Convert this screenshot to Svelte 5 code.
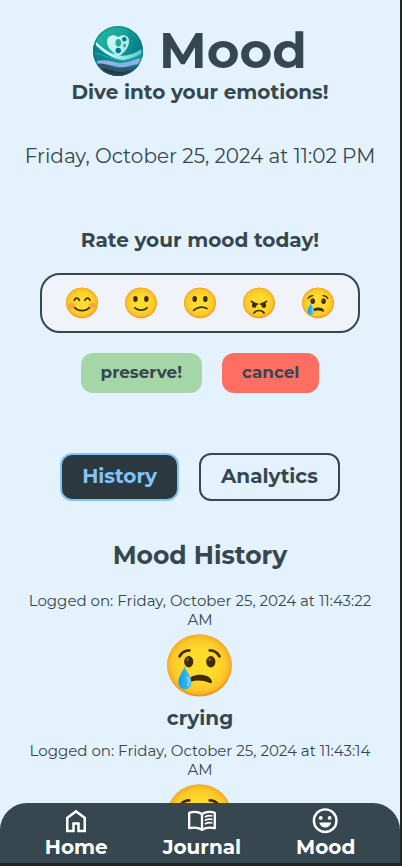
<script>
  const moods = ['blush', 'smile', 'confused', 'angry', 'crying'];
  const entries = [
    { id: 1, time: '11:43:22', mood: 'crying', label: 'crying' },
    { id: 2, time: '11:43:14', mood: 'crying' }
  ];
  const tabs = [
    { label: 'History', active: true },
    { label: 'Analytics', active: false }
  ];
</script>

{#snippet face(kind, size)}
  <svg class="face" width={size} height={size} viewBox="0 0 128 128" role="img" aria-label={kind}>
    <defs>
      <radialGradient id="skin-{kind}-{size}" cx=".5" cy=".5" r=".52">
        <stop offset=".45" stop-color="#fddc2b" />
        <stop offset=".8" stop-color="#fbc928" />
        <stop offset="1" stop-color="#f5a627" />
      </radialGradient>
      <linearGradient id="tear-{kind}-{size}" x1="0" x2="1">
        <stop offset="0" stop-color="#1698ee" />
        <stop offset=".6" stop-color="#29b6f6" />
        <stop offset="1" stop-color="#5bb8ed" />
      </linearGradient>
    </defs>
    <ellipse cx="64" cy="64" rx="60" ry="57.5" fill="#ef9518" />
    <ellipse cx="63.5" cy="62.5" rx="59.5" ry="56" fill="url(#skin-{kind}-{size})" />
    {#if kind === 'blush'}
      <ellipse cx="25" cy="74" rx="13" ry="11" fill="#f5795b" opacity=".5" />
      <ellipse cx="103" cy="74" rx="13" ry="11" fill="#f5795b" opacity=".5" />
      <path class="line" d="M35 54c3-11 16-11 19 0M75 54c3-11 16-11 19 0M37 82c14 14 40 14 54 0" />
    {:else if kind === 'smile'}
      <ellipse class="ink" cx="43" cy="49" rx="8.5" ry="11" />
      <ellipse class="ink" cx="84" cy="49" rx="8.5" ry="11" />
      <path class="line" d="M41 82c12 12 34 12 46 0" />
    {:else if kind === 'confused'}
      <ellipse class="ink" cx="44" cy="49" rx="8.5" ry="11" />
      <ellipse class="ink" cx="84" cy="49" rx="8.5" ry="11" />
      <path class="line" d="M40 92c12-12 32-17 50-7" />
    {:else if kind === 'angry'}
      <ellipse class="ink" cx="46" cy="72" rx="8.5" ry="10" />
      <ellipse class="ink" cx="82" cy="72" rx="8.5" ry="10" />
      <path d="M32 54h24v14z" fill="#fddc2b" />
      <path d="M96 54H72v14z" fill="#fddc2b" />
      <path class="line" d="M36 58c6 7 12 9 22 10M92 58c-6 7-12 9-22 10M45 102c7-13 31-13 38 0" />
    {:else}
      <path class="brow" d="M27 47c4-7 10-11 18-11M101 47c-4-7-10-11-18-11" />
      <ellipse class="ink" cx="44" cy="57" rx="8.5" ry="10.5" />
      <ellipse class="ink" cx="85" cy="57" rx="8.5" ry="10.5" />
      <ellipse class="glint" cx="42" cy="53" rx="2.500" ry="3" />
      <ellipse class="glint" cx="83" cy="53" rx="2.500" ry="3" />
      <path class="ink" d="M44 93c1-16 40-16 43 0 1 4-2 4-5 3-12-5-23-5-34-2-3 1-4 1-4-1z" />
      <path
        d="M36 66c-2 9-11 17-11 29 0 8 5 13 12 13 8 0 12-5 12-13 0-12-10-20-13-29z"
        fill="url(#tear-{kind}-{size})"
      />
      <path d="M41 84c4 6 4 13 1 18" fill="none" stroke="#a3dcf7" stroke-width="4" opacity=".7" />
    {/if}
  </svg>
{/snippet}

<div class="device">
  <main>
    <header>
      <div class="brand">
        <svg class="logo" width="50" height="50" viewBox="0 0 50 50" aria-hidden="true">
          <defs>
            <linearGradient id="sky" x1="0" y1="0" x2=".9" y2=".8">
              <stop offset="0" stop-color="#28c4a0" />
              <stop offset=".5" stop-color="#14a19b" />
              <stop offset="1" stop-color="#086c88" />
            </linearGradient>
            <linearGradient id="crest" x1="0" x2="1">
              <stop offset="0" stop-color="#f1ffff" />
              <stop offset=".5" stop-color="#a2eee5" />
              <stop offset="1" stop-color="#55c9c9" />
            </linearGradient>
            <linearGradient id="heart" x1="0" y1="0" x2="1" y2="1">
              <stop offset="0" stop-color="#d9fbf0" />
              <stop offset="1" stop-color="#98e7e5" />
            </linearGradient>
            <linearGradient id="deep" x1="0" x2="1">
              <stop offset="0" stop-color="#0b7f8a" />
              <stop offset="1" stop-color="#0e97a3" />
            </linearGradient>
            <clipPath id="disc"><circle cx="25" cy="25" r="25" /></clipPath>
          </defs>
          <g clip-path="url(#disc)">
            <path d="M0 0h50v50H0z" fill="url(#sky)" />
            <path d="M34 6c6 2 12 8 16 15v8l-18 5c8-6 12-14 2-28z" fill="#087f93" opacity=".4" />
            <path d="M0 17c8 9 17 15 27 16 9 1 17-4 23-8v16H0z" fill="url(#deep)" />
            <path d="M3 16c7 7 15 12 23 13.500 8 1.200 16-2.500 23-6.500v4c-8 5-15 8-23 6.500C17 31.500 9 25 3 19z" fill="url(#crest)" />
            <path d="M2 27c9 1 16 7 25 8 9 0 16-4 22-7" fill="none" stroke="#1bb0ac" stroke-width="1.200" />
            <path d="M4 35c10-2 15 1 23 2 8 0 14-4 22-5l-2 6c-8 0-14 4-21 3-9-1-13-4-23-3z" fill="#92b0e2" />
            <path d="M0 38.500c10-2.500 17 1.500 24 3.500 9 2 17-3 26-3v13H0z" fill="#34536f" />
            <path d="M2 43c12-3 19 4 28 3l10-2-10 7H5z" fill="#283746" />
          </g>
          <circle cx="25" cy="25" r="24.200" fill="none" stroke="#126b79" stroke-width="1.500" opacity=".5" />
          <path
            d="M25.500 31C19 26 14 21.500 14 15.500c0-6.800 8-8 11.200-4.200C29 7.500 36.500 9 36 15.500 35.800 22 31 27 25.500 31z"
            fill="url(#heart)"
          />
          <ellipse cx="25.300" cy="16.800" rx="2.800" ry="3.800" fill="#2aa49d" />
          <circle cx="31.300" cy="13.300" r="2.300" fill="#087691" />
          <ellipse cx="31.500" cy="19.500" rx="1.500" ry="2" fill="#39a8b0" />
          <circle cx="25.300" cy="24.500" r="2.700" fill="#087691" />
        </svg>
        <h1>Mood</h1>
      </div>
      <p class="tagline">Dive into your emotions!</p>
    </header>

    <p class="today">Friday, October 25, 2024 at 11:02 PM</p>

    <section class="rate">
      <h2>Rate your mood today!</h2>
      <div class="picker">
        {#each moods as mood}
          {@render face(mood, 34)}
        {/each}
      </div>
      <div class="actions">
        <button class="save">preserve!</button>
        <button class="cancel">cancel</button>
      </div>
    </section>

    <div class="tabs">
      {#each tabs as tab}
        <button class:active={tab.active}>{tab.label}</button>
      {/each}
    </div>

    <section class="history">
      <h3>Mood History</h3>
      {#each entries as entry (entry.id)}
        <article>
          <p>Logged on: Friday, October 25, 2024 at {entry.time} AM</p>
          <div class="logged">{@render face(entry.mood, 69)}</div>
          {#if entry.label}
            <strong>{entry.label}</strong>
          {/if}
        </article>
      {/each}
    </section>
  </main>

  <nav>
    <a href="#home">
      <svg width="30" height="30" viewBox="0 0 24 24" aria-hidden="true">
        <path d="M6 19h3v-6h6v6h3v-9l-6-4.500L6 10zm-2 2V9l8-6 8 6v12h-7v-6h-2v6z" fill="currentColor" />
      </svg>
      Home
    </a>
    <a href="#journal">
      <svg width="30" height="30" viewBox="0 0 30 30" fill="none" stroke="currentColor" aria-hidden="true">
        <path
          d="M15 8C11 5.500 6 5.500 2.200 6.800v15.400C7 21 11 21.300 15 23.800c4-2.500 8-2.800 12.800-1.600V6.800C24 5.500 19 5.500 15 8zm0 0v15.500"
          stroke-width="2.300"
          stroke-linejoin="round"
        />
        <path d="M17.800 11c2.500-1.300 5-1.600 7.700-1M17.800 14.500c2.500-1.300 5-1.600 7.700-1M17.800 18c2.500-1.300 5-1.600 7.700-1" stroke-width="1.700" />
      </svg>
      Journal
    </a>
    <a href="#mood">
      <svg width="30" height="30" viewBox="0.8 0.3 30 30" aria-hidden="true">
        <circle cx="15" cy="15" r="11.300" fill="none" stroke="currentColor" stroke-width="2.400" />
        <circle cx="10.600" cy="12.200" r="1.900" fill="currentColor" />
        <circle cx="19.400" cy="12.200" r="1.900" fill="currentColor" />
        <path d="M9 16.700h12c-1 3.300-3.200 5-6 5s-5-1.700-6-5z" fill="currentColor" />
      </svg>
      Mood
    </a>
  </nav>
</div>

<style>
  :global(body) {
    margin: 0;
    overflow: hidden;
    background: #1e272a;
  }
  .device {
    box-sizing: border-box;
    display: grid;
    grid-template-rows: 803px 60px;
    width: 402px;
    height: 866px;
    padding-right: 2px;
    overflow: hidden;
    background: linear-gradient(#e3f2fd, #e3f2fd) 0 0 / 400px 863px no-repeat #1e272a;
    color: #37474f;
    font-family: Montserrat, Inter, 'Liberation Sans', sans-serif;
    font-size: 20px;
    line-height: 24px;
    text-align: center;
  }
  h1, h2, h3, p {
    margin: 0;
  }
  main {
    height: 803px;
    overflow: hidden;
  }
  header {
    padding-top: 20px;
  }
  .brand {
    display: flex;
    justify-content: center;
    align-items: center;
    gap: 16px;
    height: 60px;
  }
  .logo {
    margin-top: 2px;
  }
  h1 {
    padding-top: 2px;
    font-size: 50px;
    line-height: 60px;
  }
  .tagline, h2 {
    font-size: 20px;
    font-weight: 700;
    line-height: 24px;
  }
  .today {
    margin-top: 40px;
    white-space: nowrap;
  }
  .rate {
    margin-top: 60px;
  }
  .picker {
    box-sizing: border-box;
    display: flex;
    justify-content: center;
    align-items: center;
    gap: 25px;
    width: 320px;
    height: 60px;
    margin: 21px auto 20px;
    border: 2px solid #37474f;
    border-radius: 20px;
    background: #f0f3f9;
  }
  .face {
    display: block;
  }
  .ink {
    fill: #422b0d;
  }
  .glint {
    fill: #896024;
  }
  .line, .brow {
    fill: none;
    stroke: #422b0d;
    stroke-width: 6.500;
    stroke-linecap: round;
    stroke-linejoin: round;
  }
  .brow {
    stroke-width: 5;
  }
  .actions, .tabs {
    display: flex;
    justify-content: center;
    gap: 20px;
  }
  button {
    box-sizing: border-box;
    padding: 0 20px;
    border: 0;
    color: inherit;
    font: inherit;
    font-weight: 700;
  }
  .actions button {
    height: 40px;
    padding-bottom: 2px;
    border-radius: 12px;
    font-size: 16.800px;
  }
  .save {
    background: #a5d6a7;
  }
  .cancel {
    background: #ff6f61;
  }
  .tabs {
    margin-top: 60px;
  }
  .tabs button {
    height: 48px;
    padding-bottom: 2px;
    border: 2px solid #37474f;
    border-radius: 12px;
    background: transparent;
  }
  .tabs .active {
    border-color: #82c4f8;
    background: #2c3840;
    color: #82c4f8;
  }
  h3 {
    margin: 39px 0 21px;
    font-size: 25px;
    line-height: 30px;
  }
  article {
    height: 150px;
  }
  article p {
    padding: 0 20px;
    font-size: 15px;
    line-height: 19px;
  }
  .logged {
    display: flex;
    justify-content: center;
    align-items: center;
    height: 72px;
    padding: 0 1px 5px 0;
  }
  article strong {
    display: block;
  }
  nav {
    display: flex;
    justify-content: center;
    gap: 55px;
    border-radius: 27px 27px 0 0;
    background: #37474f;
    color: #fff;
    font-weight: 700;
  }
  nav a {
    display: flex;
    flex-direction: column;
    align-items: center;
    padding-top: 3px;
    color: inherit;
    text-decoration: none;
  }
  nav svg {
    margin-bottom: -1px;
  }
</style>
